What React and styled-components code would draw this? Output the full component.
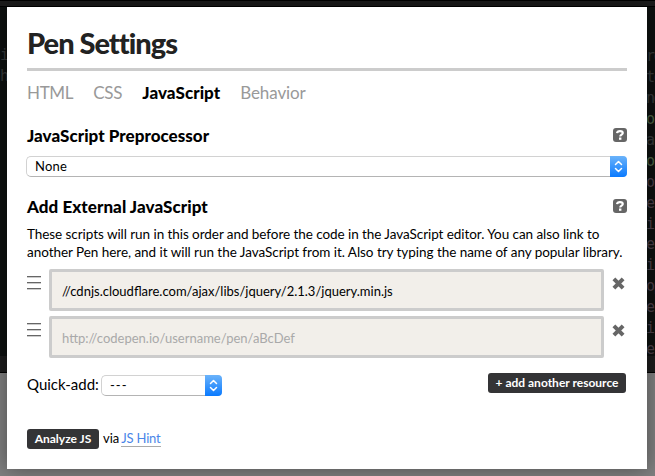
import React from "react";
import styled, { createGlobalStyle } from "styled-components";

const GlobalStyle = createGlobalStyle`
  * { box-sizing: border-box; }
  body { margin: 0; overflow: hidden; background: #808080; }
  button, input { font-family: inherit; }
`;

const Page = styled.div`
  position: relative;
  width: 655px;
  height: 476px;
  overflow: hidden;
  background: #808080;
  font-family: Lato, "Liberation Sans", sans-serif;
  color: #000;
`;

const Backdrop = styled.div`
  position: absolute;
  inset: 0;
  display: flex;
  flex-direction: column;
`;

const TopBar = styled.div`
  height: 7px;
  background: #1c1c1c;
  border-top: 1px solid #000;
  border-bottom: 1px solid #000;
`;

const Editors = styled.div`
  display: flex;
  justify-content: space-between;
  height: 349px;
  background: #0e1110;
`;

const Gutter = styled.div`
  width: 8px;
  padding-top: ${(p) => p.$top}px;
  overflow: hidden;
  font: 15px/20.95px "DejaVu Sans Mono", monospace;
  letter-spacing: -1.2px;
  text-indent: ${(p) => p.$indent}px;
`;

const CodeLine = styled.div`
  height: 20.95px;
  white-space: pre;
  color: ${(p) => p.$color};
`;

const BottomBar = styled.div`
  height: 17px;
  background: #1c1c1c;
  border-bottom: 1px solid #000;
`;

const Modal = styled.main`
  position: absolute;
  left: 7px;
  top: 7px;
  width: 640px;
  height: 462px;
  padding: 0 20px;
  background: #fff;
  box-shadow: 0 0 20px rgba(0, 0, 0, 0.4);
`;

const Title = styled.h1`
  height: 64px;
  margin: 0;
  padding-top: 19px;
  border-bottom: 3px solid #ccc;
  font-size: 29px;
  line-height: 34px;
  font-weight: 900;
  letter-spacing: ${(p) => p.$track}px;
  color: #222;
`;

const Tabs = styled.nav`
  display: flex;
  gap: 20px;
  height: 54px;
  padding-top: 12px;
  font-size: 17px;
  line-height: 20px;
`;

const Tab = styled.span`
  color: ${(p) => (p.$active ? "#000" : "#999")};
  font-weight: ${(p) => (p.$active ? 900 : 400)};
  letter-spacing: ${(p) => p.$track || 0}px;
`;

const SectionHead = styled.div`
  display: flex;
  justify-content: space-between;
  align-items: center;
  height: 20px;
`;

const Heading = styled.h2`
  margin: 0;
  padding-top: 2px;
  font-size: 17px;
  line-height: 20px;
  font-weight: 900;
  letter-spacing: ${(p) => p.$track}px;
`;

const Help = styled.span`
  display: flex;
  width: 14px;
  height: 14px;
  svg { display: block; }
`;

const Select = styled.div`
  display: flex;
  justify-content: space-between;
  width: ${(p) => p.$width}px;
  height: 21px;
  margin-left: ${(p) => p.$shift || 0}px;
  border: 1px solid #d2d2d2;
  border-bottom-color: #b4b4b4;
  border-right: 0;
  border-radius: 5px;
  background: #fff;
  font-size: 13px;
  line-height: 19px;
  padding-left: 8px;
  letter-spacing: ${(p) => p.$track || 0}px;
`;

const Stepper = styled.span`
  display: flex;
  align-items: center;
  justify-content: center;
  width: 17px;
  height: 21px;
  margin-top: -1px;
  border-radius: 0 4px 4px 0;
  background: linear-gradient(#6bb3fa, #0a7aff);
`;

const Section = styled.section`
  padding-top: ${(p) => p.$top}px;
`;

const Description = styled.p`
  margin: 9px 0 0;
  font-size: 13.5px;
  line-height: 18px;
  white-space: nowrap;
`;

const DescriptionLine = styled.span`
  display: block;
  letter-spacing: ${(p) => p.$track}px;
`;

const Resources = styled.div`
  display: flex;
  flex-direction: column;
  gap: 5px;
  padding-top: 8px;
`;

const Resource = styled.div`
  display: flex;
  align-items: flex-start;
  height: 42px;
`;

const Handle = styled.svg`
  flex: none;
  width: 14px;
  height: 16px;
  margin: 7px 8px 0 0;
`;

const Field = styled.div`
  width: 555px;
  height: 42px;
  padding: 0 10px;
  border: 3px solid #ccc;
  border-radius: 2px;
  background: #f2efea;
  font-size: 13px;
  line-height: 38px;
  color: ${(p) => (p.$placeholder ? "#a9a9a9" : "#000")};
`;

const Remove = styled.svg`
  flex: none;
  width: 13px;
  height: 13px;
  margin: 8px 0 0 7.5px;
`;

const AddRow = styled.div`
  display: flex;
  height: 69px;
  padding-top: 17px;
`;

const QuickLabel = styled.span`
  width: 75px;
  font-size: 15px;
  line-height: 19px;
  white-space: nowrap;
`;

const Button = styled.button`
  width: ${(p) => p.$width}px;
  height: 20px;
  margin: ${(p) => p.$margin || 0};
  padding: 0;
  border: 0;
  border-radius: 3px;
  background: #343436;
  color: #fff;
  font-size: 12px;
  line-height: 20px;
  font-weight: 700;
  white-space: nowrap;
`;

const Footer = styled.footer`
  display: flex;
  padding-top: 2px;
  font-size: 13px;
  line-height: 19px;
`;

const Via = styled.span`
  margin: 0 2px 0 4px;
`;

const Link = styled.a`
  height: 18px;
  border-bottom: 1px solid #aaa;
  color: #4a86e8;
  letter-spacing: ${(p) => p.$track}px;
`;

const leftCode = [["i", "#36393a"], ["h", "#36393a"]];
const rightCode = [
  ["rg", "#36393a"], ["to", "#36393a"], ["ng", "#36393a"], ["on", "#4c6144"],
  ["a", "#36393a"], ["on", "#4c6144"], ["op", "#4b3f48"], ["e", "#4b3f48"],
  ["ic", "#4b3f48"], ["e", "#4b3f48"], ["in", "#4b3f48"], ["op", "#4b3f48"],
  ["e", "#4b3f48"], ["ic", "#4b3f48"], ["e", "#4b3f48"],
];

const HelpIcon = () => (
  <Help>
    <svg width="14" height="14" viewBox="0 0 14 14">
      <rect width="14" height="14" rx="3" fill="#666" />
      <path d="M4 5.200C4.200 3.700 5.400 3.100 7 3.100s2.800.7 2.800 2C9.800 6.700 7.200 6.500 7.200 8.600" fill="none" stroke="#fff" strokeWidth="2.100" />
      <rect x="6" y="9.500" width="2.400" height="2.300" fill="#fff" />
    </svg>
  </Help>
);

const Arrows = () => (
  <Stepper>
    <svg width="9" height="13" viewBox="0 0 9 13" fill="none" stroke="#fff" strokeWidth="1.500" strokeLinecap="round" strokeLinejoin="round">
      <path d="M1.500 4.500 4.500 1.500 7.500 4.500M1.500 8.500 4.500 11.500 7.500 8.500" />
    </svg>
  </Stepper>
);

const ResourceRow = ({ text, placeholder }) => (
  <Resource>
    <Handle viewBox="0 0 14 16">
      <path d="M0 .5H14M0 6.500H14M0 12.500H14" stroke="#666" />
      <path d="M0 1.500H14M0 7.500H14M0 13.500H14" stroke="#ccc" />
    </Handle>
    <Field $placeholder={placeholder}>{text}</Field>
    <Remove viewBox="0 0 13 13">
      <path d="M1.900 1.900 11.100 11.100M11.100 1.900 1.900 11.100" stroke="#666" strokeWidth="4" />
    </Remove>
  </Resource>
);

export default function App() {
  return (
    <Page>
      <GlobalStyle />
      <Backdrop>
        <TopBar />
        <Editors>
          <Gutter $top={38} $indent={0}>
            {leftCode.map(([t, c], i) => <CodeLine key={i} $color={c}>{t}</CodeLine>)}
          </Gutter>
          <Gutter $top={39} $indent={-1}>
            {rightCode.map(([t, c], i) => <CodeLine key={i} $color={c}>{t}</CodeLine>)}
          </Gutter>
        </Editors>
        <BottomBar />
      </Backdrop>
      <Modal>
        <Title $track={-0.98}>Pen Settings</Title>
        <Tabs>
          <Tab $track={-0.35}>HTML</Tab>
          <Tab $track={-0.2}>CSS</Tab>
          <Tab $active $track={0.05}>JavaScript</Tab>
          <Tab $track={-0.1}>Behavior</Tab>
        </Tabs>
        <SectionHead>
          <Heading $track={0.03}>JavaScript Preprocessor</Heading>
          <HelpIcon />
        </SectionHead>
        <Section $top={11}>
          <Select $width={601} $shift={-1} $track={0.2}>None<Arrows /></Select>
        </Section>
        <Section $top={19}>
          <SectionHead>
            <Heading $track={0.06}>Add External JavaScript</Heading>
            <HelpIcon />
          </SectionHead>
          <Description>
            <DescriptionLine $track={-0.06}>These scripts will run in this order and before the code in the JavaScript editor. You can also link to</DescriptionLine>
            <DescriptionLine $track={-0.042}>another Pen here, and it will run the JavaScript from it. Also try typing the name of any popular library.</DescriptionLine>
          </Description>
        </Section>
        <Resources>
          <ResourceRow text="//cdnjs.cloudflare.com/ajax/libs/jquery/2.1.3/jquery.min.js" />
          <ResourceRow placeholder text="http://codepen.io/username/pen/aBcDef" />
        </Resources>
        <AddRow>
          <QuickLabel>Quick-add:</QuickLabel>
          <Select $width={121} $shift={-1} $track={1}>---<Arrows /></Select>
          <Button $width={138} $margin="-2px 1px 0 auto">+ add another resource</Button>
        </AddRow>
        <Footer>
          <Button $width={72}>Analyze JS</Button>
          <Via>via</Via>
          <Link $track={-0.2}>JS Hint</Link>
        </Footer>
      </Modal>
    </Page>
  );
}
